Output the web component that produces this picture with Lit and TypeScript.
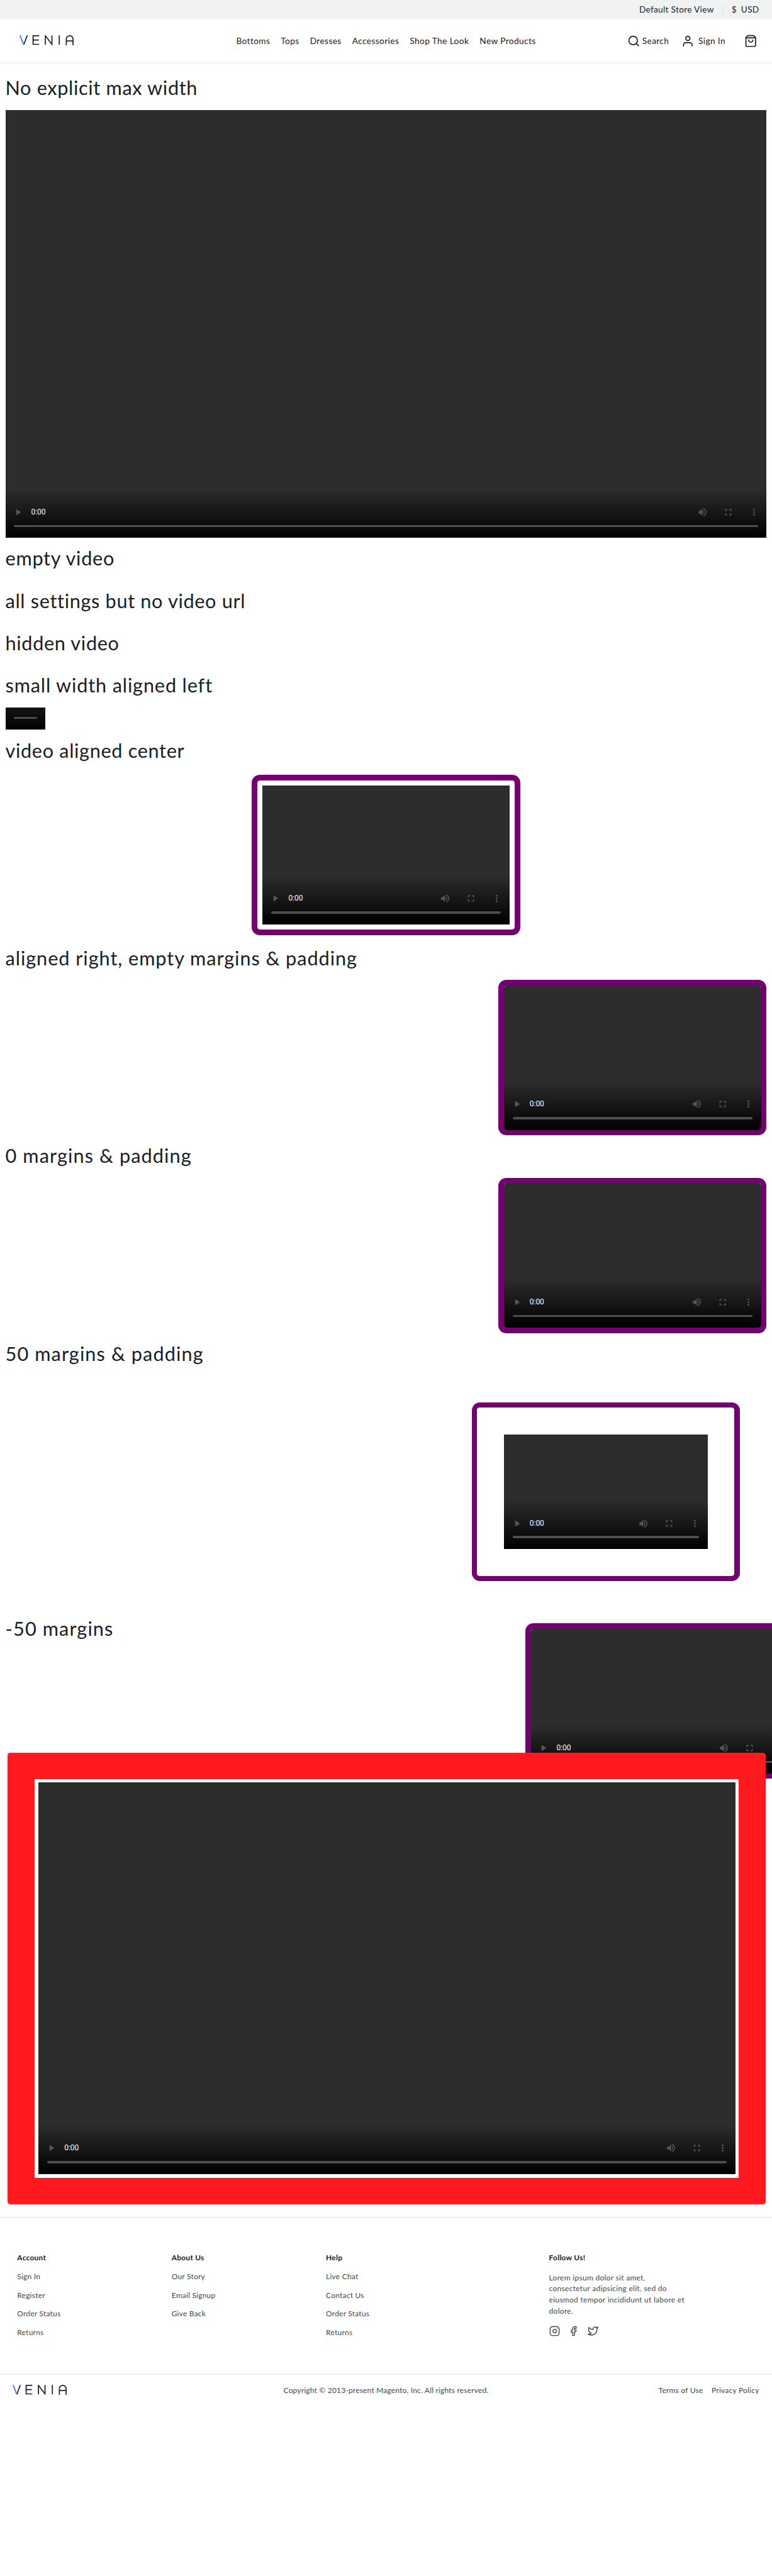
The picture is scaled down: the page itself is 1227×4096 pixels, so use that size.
import { LitElement, html, css, svg } from "lit";
import { customElement, property } from "lit/decorators.js";
import { classMap } from "lit/directives/class-map.js";

@customElement("venia-logo")
class VeniaLogo extends LitElement {
  static styles = css`
    :host { display: block; width: 102px; height: 18px; }
    svg { display: block; overflow: hidden; }
  `;
  render() {
    return html`<svg width="102" height="18" viewBox="0 0 102 18" fill="none" stroke="#172026" stroke-width="2" stroke-linecap="round">
      <line x1="8.200" y1="17" x2="14.200" y2="1"></line>
      <line x1="1.200" y1="1" x2="7.400" y2="17" stroke="#4f7bff" stroke-width="2.300"></line>
      <polyline points="36,1 25.3,1 25.3,17 36,17"></polyline>
      <line x1="25.300" y1="9" x2="35" y2="9"></line>
      <polyline points="48.3,17 48.3,1 60.5,17 60.5,1"></polyline>
      <line x1="74.200" y1="1" x2="74.200" y2="17"></line>
      <rect x="87.300" y="1" width="12.600" height="30" rx="6.200"></rect>
      <line x1="88" y1="10.600" x2="99.500" y2="10.600"></line>
    </svg>`;
  }
}

@customElement("video-player")
class VideoPlayer extends LitElement {
  @property({ type: Boolean }) compact = false;
  static styles = css`
    :host { display: block; }
    .frame {
      aspect-ratio: 16 / 9;
      display: flex;
      flex-direction: column;
      justify-content: flex-end;
      overflow: hidden;
      border-radius: inherit;
      background: linear-gradient(to top, #000, rgba(0, 0, 0, 0) 93px) #2d2d2d;
    }
    .row { display: flex; align-items: center; height: 48px; flex: none; color: #fff; }
    .btn { width: 48px; height: 48px; display: flex; align-items: center; justify-content: center; flex: none; opacity: 0.27; }
    .play { margin-left: 0; }
    .time { font: 14px/20px Roboto, "Liberation Sans", sans-serif; flex: 1; padding-left: 10px; }
    .lead { padding-left: 0; }
    .bar { flex: none; height: 4px; border-radius: 2px; margin: 0 16px 20px; background: #4d4d4d; }
    .end { justify-content: flex-end; }
  `;
  icon(body: unknown) {
    return html`<svg width="20" height="20" viewBox="0 0 24 24" fill="#fff">${body}</svg>`;
  }
  render() {
    const menu = html`<span class="btn">${this.icon(svg`<path d="M12 8c1.100 0 2-.9 2-2s-.9-2-2-2-2 .9-2 2 .9 2 2 2zm0 2c-1.100 0-2 .9-2 2s.9 2 2 2 2-.9 2-2-.9-2-2-2zm0 6c-1.100 0-2 .9-2 2s.9 2 2 2 2-.9 2-2-.9-2-2-2z"/>`)}</span>`;
    return html`<div class="frame">
      <div class=${classMap({ row: true, end: this.compact })}>
        ${this.compact
          ? menu
          : html`<span class="btn">${this.icon(svg`<path d="M8 5v14l11-7z"/>`)}</span>
            <span class="time lead">0:00</span>
            <span class="btn">${this.icon(svg`<path d="M3 9v6h4l5 5V4L7 9H3zm13.500 3c0-1.770-1.020-3.290-2.500-4.030v8.050c1.480-.73 2.500-2.250 2.500-4.020zM14 3.230v2.060c2.890.86 5 3.540 5 6.710s-2.110 5.850-5 6.710v2.060c4.010-.91 7-4.490 7-8.770s-2.990-7.860-7-8.770z"/>`)}</span>
            <span class="btn">${this.icon(svg`<path d="M7 14H5v5h5v-2H7v-3zm-2-4h2V7h3V5H5v5zm12 7h-3v2h5v-5h-2v3zM14 5v2h3v3h2V5h-5z"/>`)}</span>
            ${menu}`}
      </div>
      <div class="bar"></div>
    </div>`;
  }
}

const NAV = ["Bottoms", "Tops", "Dresses", "Accessories", "Shop The Look", "New Products"];
const COLUMNS = [
  { title: "Account", links: ["Sign In", "Register", "Order Status", "Returns"] },
  { title: "About Us", links: ["Our Story", "Email Signup", "Give Back"] },
  { title: "Help", links: ["Live Chat", "Contact Us", "Order Status", "Returns"] },
];
const BLURB = [
  "Lorem ipsum dolor sit amet,",
  "consectetur adipsicing elit, sed do",
  "eiusmod tempor incididunt ut labore et",
  "dolore.",
];

@customElement("app-root")
class AppRoot extends LitElement {
  static styles = css`
    :host {
      display: block;
      zoom: 0.8522;
      height: 4806px;
      overflow: hidden;
      background: #fff;
      color: #172026;
      font-family: Lato, "Open Sans", sans-serif;
      font-size: 16px;
      line-height: 24px;
    }
    * { box-sizing: border-box; }
    svg { display: block; }
    .topbar { height: 36px; background: #f1f3f3; display: flex; justify-content: flex-end; align-items: center; padding-right: 24px; letter-spacing: 0.38px; }
    .divider { width: 1px; height: 16px; background: #d5d8d9; margin: 0 16px 0 16px; }
    .usd { margin-left: 8px; }
    .header { height: 80px; display: grid; grid-template-columns: 1fr auto 1fr; align-items: center; padding: 0 28px; }
    .header venia-logo { margin: 0 0 2px 8px; }
    .rule { height: 2px; background: #f2f2f2; }
    .nav { display: flex; gap: 20px; letter-spacing: 0.5px; }
    .actions { display: flex; justify-content: flex-end; align-items: center; letter-spacing: 0.45px; }
    .search { margin-left: 4px; }
    .user { margin-left: 23px; }
    .signin { margin-left: 8px; }
    .bag { margin-left: 35px; }
    .content { padding: 8px 10px 20px; display: flex; flex-direction: column; }
    .title { margin: 0; font-weight: 400; font-size: 36px; line-height: 45px; height: 79px; padding-top: 16.5px; flex: none; letter-spacing: 0.78px; }
    .t2 { letter-spacing: 0.87px; }
    .t5 { letter-spacing: 1px; }
    .t7 { letter-spacing: 1.12px; }
    .t8, .t9, .t10 { letter-spacing: 1.3px; }
    .small { width: 75px; }
    .box { width: 500px; padding: 10px; background: #740070; border-radius: 15px; align-self: flex-end; flex: none; }
    .inner { background: #fff; border-radius: 5px; }
    .box video-player { border-radius: 5px; }
    .center { align-self: center; margin: 5px 0; }
    .center .inner { padding: 10px; }
    .center video-player, .wide video-player { border-radius: 0; }
    .wide { margin: 50px; }
    .wide .inner { padding: 50px; }
    .pulled { margin: -50px; }
    .red { padding: 50px; background: #ff1a1f; border-radius: 5px; margin: 1px 2px 3px 4px; position: relative; }
    .mat { background: #fff; padding: 5px 6px 7px 8px; }
    .footer { font-size: 14px; line-height: 21px; color: #3d474e; letter-spacing: 0.3px; }
    .columns { height: 291px; padding: 64px 32px 0; display: grid; grid-template-columns: 288px 288px 416px 1fr; }
    .column { display: flex; flex-direction: column; gap: 14px; }
    .head { color: #172026; font-weight: 700; }
    .blurb { display: flex; flex-direction: column; margin-top: 2px; white-space: nowrap; letter-spacing: 0.38px; }
    .social { display: flex; gap: 16px; margin-top: 2px; }
    .legal { height: 56px; padding: 0 24px; display: grid; grid-template-columns: 1fr auto 1fr; align-items: center; }
    .copy { letter-spacing: 0.26px; padding-top: 3px; }
    .links { display: flex; justify-content: flex-end; gap: 16px; padding-top: 3px; }
  `;
  icon(size: number, width: number, body: unknown) {
    return html`<svg width=${size} height=${size} viewBox="0 0 24 24" fill="none" stroke="currentColor" stroke-width=${width} stroke-linecap="round" stroke-linejoin="round">${body}</svg>`;
  }
  render() {
    const boxed = (extra: string) =>
      html`<div class=${"box " + extra}><div class="inner"><video-player></video-player></div></div>`;
    return html`
      <div class="topbar">
        <span>Default Store View</span><span class="divider"></span><span>$</span><span class="usd">USD</span>
      </div>
      <header class="header">
        <venia-logo></venia-logo>
        <nav class="nav">${NAV.map((n) => html`<span>${n}</span>`)}</nav>
        <div class="actions">
          ${this.icon(24, 2, svg`<circle cx="11" cy="11" r="8"/><line x1="21" y1="21" x2="16.650" y2="16.650"/>`)}
          <span class="search">Search</span>
          <span class="user">${this.icon(24, 2, svg`<path d="M20 21v-2a4 4 0 0 0-4-4H8a4 4 0 0 0-4 4v2"/><circle cx="12" cy="7" r="4"/>`)}</span>
          <span class="signin">Sign In</span>
          <span class="bag">${this.icon(24, 2, svg`<path d="M6 2L3 6v14a2 2 0 0 0 2 2h14a2 2 0 0 0 2-2V6l-3-4z"/><line x1="3" y1="6" x2="21" y2="6"/><path d="M16 10a4 4 0 0 1-8 0"/>`)}</span>
        </div>
      </header>
      <div class="rule"></div>
      <main class="content">
        <h2 class="title">No explicit max width</h2>
        <video-player></video-player>
        <h2 class="title t2">empty video</h2>
        <h2 class="title">all settings but no video url</h2>
        <h2 class="title">hidden video</h2>
        <h2 class="title t5">small width aligned left</h2>
        <video-player class="small" compact></video-player>
        <h2 class="title">video aligned center</h2>
        ${boxed("center")}
        <h2 class="title t7">aligned right, empty margins &amp; padding</h2>
        ${boxed("")}
        <h2 class="title t8">0 margins &amp; padding</h2>
        ${boxed("")}
        <h2 class="title t9">50 margins &amp; padding</h2>
        ${boxed("wide")}
        <h2 class="title t10">-50 margins</h2>
        ${boxed("pulled")}
        <div class="red"><div class="mat"><video-player></video-player></div></div>
      </main>
      <footer class="footer">
        <div class="rule"></div>
        <div class="columns">
          ${COLUMNS.map((c) => html`<div class="column"><span class="head">${c.title}</span>${c.links.map((l) => html`<span>${l}</span>`)}</div>`)}
          <div class="column">
            <span class="head">Follow Us!</span>
            <div class="blurb">${BLURB.map((l) => html`<span>${l}</span>`)}</div>
            <div class="social">
              ${this.icon(20, 2, svg`<rect x="2" y="2" width="20" height="20" rx="5"/><path d="M16 11.370A4 4 0 1 1 12.630 8 4 4 0 0 1 16 11.370z"/><line x1="17.500" y1="6.500" x2="17.510" y2="6.500"/>`)}
              ${this.icon(20, 2, svg`<path d="M18 2h-3a5 5 0 0 0-5 5v3H7v4h3v8h4v-8h3l1-4h-4V7a1 1 0 0 1 1-1h3z"/>`)}
              ${this.icon(20, 2, svg`<path d="M23 3a10.900 10.900 0 0 1-3.140 1.530 4.480 4.480 0 0 0-7.860 3v1A10.660 10.660 0 0 1 3 4s-4 9 5 13a11.640 11.640 0 0 1-7 2c9 5 20 0 20-11.500a4.500 4.500 0 0 0-.08-.83A7.720 7.720 0 0 0 23 3z"/>`)}
            </div>
          </div>
        </div>
        <div class="rule"></div>
        <div class="legal">
          <venia-logo></venia-logo>
          <span class="copy">Copyright © 2013-present Magento, Inc. All rights reserved.</span>
          <div class="links"><span>Terms of Use</span><span>Privacy Policy</span></div>
        </div>
      </footer>
    `;
  }
}
